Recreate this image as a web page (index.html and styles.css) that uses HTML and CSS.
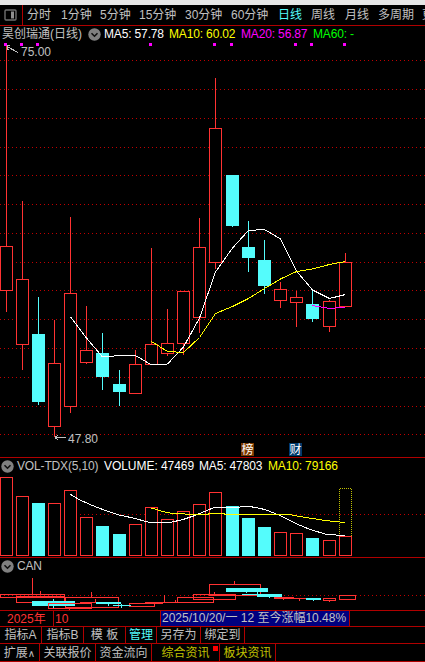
FILE: index.html
```html
<!DOCTYPE html>
<html lang="zh-CN">
<head>
    <meta charset="UTF-8">
    <title>昊创瑞通(日线)</title>
    <link rel="stylesheet" href="styles.css">
</head>
<body>
    <div class="strip"></div>
    <div class="tabs">
        <div class="tab-icon">
            <svg width="13" height="12" viewBox="0 0 13 12">
                <rect x="1" y="1" width="11" height="10" rx="1" fill="none" stroke="#707070" stroke-width="1.4"/>
                <rect x="7" y="2.5" width="3" height="7" fill="#909090"/>
            </svg>
        </div>
        <span class="w34">分时</span>
        <span class="w39">1分钟</span>
        <span class="w39">5分钟</span>
        <span class="w46">15分钟</span>
        <span class="w46">30分钟</span>
        <span class="w47">60分钟</span>
        <span class="w33 active">日线</span>
        <span class="w34">周线</span>
        <span class="w33">月线</span>
        <span class="w44">多周期</span>
        <span>更</span>
    </div>

    <div class="panel main">
        <div class="head">
            <span class="stock">昊创瑞通(日线)</span>
            <svg class="drop" width="13" height="13" viewBox="0 0 13 13">
                <circle cx="6.5" cy="6.5" r="6.2" fill="#808080"/>
                <path d="M3.5 5.2L6.5 8.2L9.5 5.2" fill="none" stroke="#101010" stroke-width="1.6"/>
            </svg>
            <span class="ma5">MA5: 57.78</span>
            <span class="ma10">MA10: 60.02</span>
            <span class="ma20">MA20: 56.87</span>
            <span class="ma60">MA60: -</span>
        </div>
        <svg class="chart" width="425" height="414" viewBox="0 43 425 414">
            <path class="grid" d="M0 60.5H425M0 89.5H425M0 118.5H425M0 147.5H425M0 175.5H425M0 204.5H425M0 233.5H425M0 262.5H425M0 290.5H425M0 319.5H425M0 348.5H425M0 377.5H425M0 406.5H425M0 434.5H425"/>
            <!-- up candles -->
            <path class="up" d="M6.5 45V246M6.5 290V312M22.5 201V279M22.5 344V370M54.5 320V363M54.5 426V437M70.5 217V293M70.5 406V413M86.5 306V350M86.5 362V364M135.5 350V364M151.5 248V344M167.5 309V343M167.5 353V356M183.5 343V355M199.5 218V247M199.5 317V333M215.5 78V128M215.5 262V269M280.5 282V289M280.5 300V308M296.5 291V297M296.5 302V327M329.5 300V301M329.5 326V332M345.5 253V262"/>
            <g class="up">
                <rect x="0.5" y="246.5" width="12" height="44"/>
                <rect x="16.5" y="279.5" width="12" height="65"/>
                <rect x="48.5" y="363.5" width="12" height="63"/>
                <rect x="64.5" y="293.5" width="12" height="113"/>
                <rect x="80.5" y="350.5" width="12" height="12"/>
                <rect x="129.5" y="364.5" width="12" height="29"/>
                <rect x="145.5" y="344.5" width="12" height="20"/>
                <rect x="161.5" y="343.5" width="12" height="10"/>
                <rect x="177.5" y="291.5" width="12" height="52"/>
                <rect x="193.5" y="247.5" width="12" height="70"/>
                <rect x="209.5" y="128.5" width="12" height="134"/>
                <rect x="274.5" y="289.5" width="12" height="11"/>
                <rect x="290.5" y="297.5" width="12" height="5"/>
                <rect x="323.5" y="301.5" width="12" height="25"/>
                <rect x="339.5" y="262.5" width="12" height="44"/>
            </g>
            <!-- down candles -->
            <g class="down">
                <path d="M38 297h1v108h-1zM102 333h1v57h-1zM119 370h1v36h-1zM232 226h1v1h-1zM248 221h1v51h-1zM264 240h1v54h-1zM312 290h1v32h-1z"/>
                <path d="M32 334h13v68h-13zM96 353h13v24h-13zM113 384h13v8h-13zM226 175h13v51h-13zM242 247h13v11h-13zM258 260h13v26h-13zM306 304h13v15h-13z"/>
            </g>
            <polyline class="line-ma5" points="70.5,317 86.5,338 102.5,357 119.5,355.5 135.5,355.5 151.5,365 167.5,364 183.5,347 199.5,318 215.5,272 232.5,248 248.5,230.5 264.5,229.5 280.5,239 296.5,271 312.5,290 329.5,298.5 345.5,294.5"/>
            <polyline class="line-ma10" points="151.5,341.5 167.5,351.5 183.5,352.5 199.5,337.5 215.5,313.5 232.5,306.5 248.5,298.5 264.5,288.5 280.5,279 296.5,271.5 312.5,269 329.5,264.5 345.5,261.5"/>
            <polyline class="line-ma20" points="312.5,305.5 329.5,308.5 345.5,307"/>
            <path class="marks" d="M4 43h3v3h-3zM20 43h3v3h-3zM36 43h3v3h-3zM149 43h3v3h-3zM213 43h3v3h-3zM230 43h3v3h-3zM294 43h3v3h-3zM310 43h3v3h-3zM343 43h3v3h-3z"/>
            <path class="arrow" d="M7 46.5L18 52.5M7 45.5H10M7 47.5L8.5 50.5M55 437.5H65.5M55 437.5L58.5 434.5M55 437.5L58.5 440.5"/>
            <text class="price" x="21" y="56">75.00</text>
            <text class="price" x="68" y="443">47.80</text>
            <rect x="241" y="443" width="13" height="13" fill="#7c3a00"/>
            <text class="badge" x="241.5" y="454">榜</text>
            <rect x="289" y="443" width="13" height="13" fill="#003a6c"/>
            <text class="badge" x="289.5" y="454">财</text>
        </svg>
    </div>

    <div class="panel vol">
        <div class="head">
            <svg class="drop" width="13" height="13" viewBox="0 0 13 13">
                <circle cx="6.5" cy="6.5" r="6.2" fill="#808080"/>
                <path d="M3.5 5.2L6.5 8.2L9.5 5.2" fill="none" stroke="#101010" stroke-width="1.6"/>
            </svg>
            <span class="name">VOL-TDX(5,10)</span>
            <span class="volume">VOLUME: 47469</span>
            <span class="ma5">MA5: 47803</span>
            <span class="ma10">MA10: 79166</span>
        </div>
        <svg class="chart" width="425" height="82" viewBox="0 475 425 82">
            <path class="grid" d="M0 514.5H425"/>
            <path class="last" d="M339.5 536V488.5H351.5V536"/>
            <g class="up">
                <rect x="0.5" y="477.5" width="12" height="78"/>
                <rect x="16.5" y="496.5" width="12" height="59"/>
                <rect x="48.5" y="503.5" width="12" height="52"/>
                <rect x="64.5" y="490.5" width="12" height="65"/>
                <rect x="80.5" y="517.5" width="12" height="38"/>
                <rect x="129.5" y="524.5" width="12" height="31"/>
                <rect x="145.5" y="507.5" width="12" height="48"/>
                <rect x="161.5" y="519.5" width="12" height="36"/>
                <rect x="177.5" y="511.5" width="12" height="44"/>
                <rect x="193.5" y="504.5" width="12" height="51"/>
                <rect x="209.5" y="492.5" width="12" height="63"/>
                <rect x="274.5" y="532.5" width="12" height="23"/>
                <rect x="290.5" y="533.5" width="12" height="22"/>
                <rect x="323.5" y="540.5" width="12" height="15"/>
                <rect x="339.5" y="536.5" width="12" height="19"/>
            </g>
            <path class="down" d="M32 503h13v53h-13zM96 526h13v30h-13zM113 534h13v22h-13zM226 506h13v50h-13zM242 518h13v38h-13zM258 527h13v29h-13zM306 538h13v18h-13z"/>
            <polyline class="line-ma5" points="70.5,494.5 80,500 90,504.5 100,508.5 117,514.5 133,518 150,522.5 170,522.5 183,519.5 195,515.5 213,508 219,507.5 238,507.5 242,506.5 250,506.5 265,509.5 280,515.5 297,524 310,529.5 327,534.5 345,535.5"/>
            <polyline class="line-ma10" points="151.5,508 163,511.5 172,513.5 180,513.5 190,514.5 207,514.5 210,513.5 223,513.5 226,514.5 289,514.5 300,516.5 325,520.5 345,522.5"/>
        </svg>
    </div>

    <div class="panel can">
        <div class="head">
            <svg class="drop" width="13" height="13" viewBox="0 0 13 13">
                <circle cx="6.5" cy="6.5" r="6.2" fill="#808080"/>
                <path d="M3.5 5.2L6.5 8.2L9.5 5.2" fill="none" stroke="#101010" stroke-width="1.6"/>
            </svg>
            <span class="name">CAN</span>
        </div>
        <svg class="chart" width="425" height="35" viewBox="0 575 425 35">
            <path class="grid" d="M0 595.5H425"/>
            <g class="up hollow">
                <path d="M32.5 578V594M40.5 591V594M91.5 592V597M164.5 595V602M175.5 600V602M214.5 592V594M234.5 581V584M69.5 607V610M283.5 599V600M299.5 598V601M345.5 595V596M329.5 601V602"/>
                <rect x="0.5" y="594.5" width="64" height="3"/>
                <rect x="16.5" y="596.5" width="48" height="6"/>
                <path d="M16 597.5H65"/>
                <rect x="65.5" y="597.5" width="53" height="10"/>
                <path d="M80 602.5H96M95.5 599V602"/>
                <rect x="129.5" y="603.5" width="25" height="3"/>
                <path d="M145 602.5H185M155 603.5H163"/>
                <rect x="177.5" y="597.5" width="36" height="5"/>
                <rect x="193.5" y="594.5" width="42" height="5"/>
                <path d="M209.5 595V584.5H260.5V594M209 595.5H258"/>
                <path d="M274 597.5H294M274 598.5H307"/>
                <rect x="323.5" y="598.5" width="12" height="2"/>
                <rect x="339.5" y="595.5" width="16" height="4"/>
            </g>
            <path class="down" d="M32 601h43v5h-43zM53 599h1v9h-1zM96 602h25v2h-25zM108 604h1v2h-1zM113 605h18v1h-18zM121 604h1v4h-1zM226 588h42v4h-42zM246 592h1v1h-1zM242 594h32v1h-32zM257 591h1v6h-1zM257 594h25v3h-25zM269 597h1v1h-1zM306 598h15v2h-15zM313 600h1v1h-1z"/>
            <rect class="up hollow" x="48.5" y="603.5" width="43" height="5"/>
        </svg>
    </div>

    <div class="dates">
        <span class="year">2025年</span>
        <span class="month">10</span>
        <span class="cursor">2025/10/20/一 12 至今涨幅10.48%</span>
    </div>

    <div class="menu">
        <span class="c42">指标A</span>
        <span class="c42">指标B</span>
        <span class="c42">模 板</span>
        <span class="c31 active">管理</span>
        <span class="c44">另存为</span>
        <span class="c44">绑定到</span>
    </div>
    <div class="menu bottom">
        <span class="c40">扩展<b class="more">∧</b></span>
        <span class="c56">关联报价</span>
        <span class="c56">资金流向</span>
        <span class="c68 news">综合资讯<i class="dot"></i></span>
        <span class="c56 news">板块资讯</span>
    </div>
</body>
</html>
```
FILE: styles.css
```css
* {
    box-sizing: border-box;
}
body {
    margin: 0;
    width: 425px;
    height: 662px;
    overflow: hidden;
    background: #000;
    color: #c0c0c0;
    font-family: "Liberation Sans", "Noto Sans CJK SC", sans-serif;
    font-size: 12px;
    line-height: 16px;
    white-space: nowrap;
}
svg {
    display: block;
    flex: none;
}
.strip {
    height: 5px;
    background: #e6e6e6;
}

/* period tabs */
.tabs {
    display: flex;
    height: 21px;
    padding-top: 2px;
    border-bottom: 1px solid #b00000;
    overflow: hidden;
}
.tabs span {
    flex: none;
}
.tab-icon {
    flex: none;
    width: 23px;
    height: 20px;
    margin: -2px 4px 0 0;
    padding: 4px 0 0 4px;
    border-right: 1px solid #b00000;
}
.w33 { width: 33px; }
.w34 { width: 34px; }
.w39 { width: 39px; }
.w44 { width: 44px; }
.w46 { width: 46px; }
.w47 { width: 47px; }
.active {
    color: #54fcfc;
}

/* chart panels */
.panel {
    border-bottom: 1px solid #b00000;
}
.head {
    display: flex;
    height: 17px;
}
.head span {
    flex: none;
    letter-spacing: -0.15px;
}
.main .head {
    padding-left: 2px;
}
.main .drop {
    margin: 2px 3px 0 0;
}
.head .stock {
    width: 86px;
    letter-spacing: 0;
}
.main .ma5 { width: 65px; }
.main .ma10 { width: 72px; }
.main .ma20 { width: 72px; }
.vol .drop, .can .drop {
    margin: 2px 3px 0 1px;
}
.vol .name { width: 87px; }
.vol .volume {
    width: 95px;
    letter-spacing: -0.05px;
}
.vol .ma5 { width: 69px; }
.ma5, .volume { color: #fff; }
.ma10 { color: #ff0; }
.ma20 { color: #f0f; }
.ma60 { color: #0f0; }

.chart {
    shape-rendering: crispEdges;
}
.grid {
    stroke: #c00000;
    stroke-dasharray: 1 3;
}
.up {
    fill: #000;
    stroke: #ff3232;
}
.hollow {
    fill: none;
}
.down {
    fill: #54fcfc;
}
.last {
    fill: none;
    stroke: #c0c000;
    stroke-dasharray: 1 1;
}
.line-ma5, .line-ma10, .line-ma20 {
    fill: none;
    stroke: #fff;
}
.line-ma10 {
    stroke: #ff0;
}
.line-ma20 {
    stroke: #f0f;
}
.marks {
    fill: #f0f;
}
.arrow {
    fill: none;
    stroke: #c0c0c0;
}
.price {
    fill: #c0c0c0;
}
.badge {
    fill: #fff;
}

/* date axis */
.dates {
    display: flex;
    height: 16px;
    border-bottom: 1px solid #b00000;
    color: #ff3232;
}
.dates span {
    flex: none;
    height: 15px;
    border-right: 1px solid #b00000;
}
.dates .year {
    width: 54px;
    padding-left: 7px;
}
.dates .month {
    width: 107px;
    padding-left: 1px;
}
.dates .cursor {
    width: 189px;
    padding-left: 1px;
    line-height: 15px;
    background: #000080;
    color: #c0c0c0;
}

/* bottom menus */
.menu {
    display: flex;
    height: 17px;
    border-bottom: 1px solid #b00000;
}
.menu span {
    flex: none;
    height: 100%;
    border-right: 1px solid #b00000;
    text-align: center;
}
.bottom {
    height: 18px;
    line-height: 18px;
}
.c31 { width: 31px; }
.c40 { width: 40px; }
.c42 { width: 42px; }
.c44 { width: 44px; }
.c56 { width: 56px; }
.c68 { width: 68px; }
.menu .news {
    position: relative;
    color: #c0c000;
}
.more {
    font-family: "DejaVu Sans", sans-serif;
    font-size: 10px;
    font-weight: normal;
    line-height: 1;
}
.dot {
    position: absolute;
    top: 2px;
    right: 1px;
    width: 5px;
    height: 5px;
    background: #f00;
}
```
